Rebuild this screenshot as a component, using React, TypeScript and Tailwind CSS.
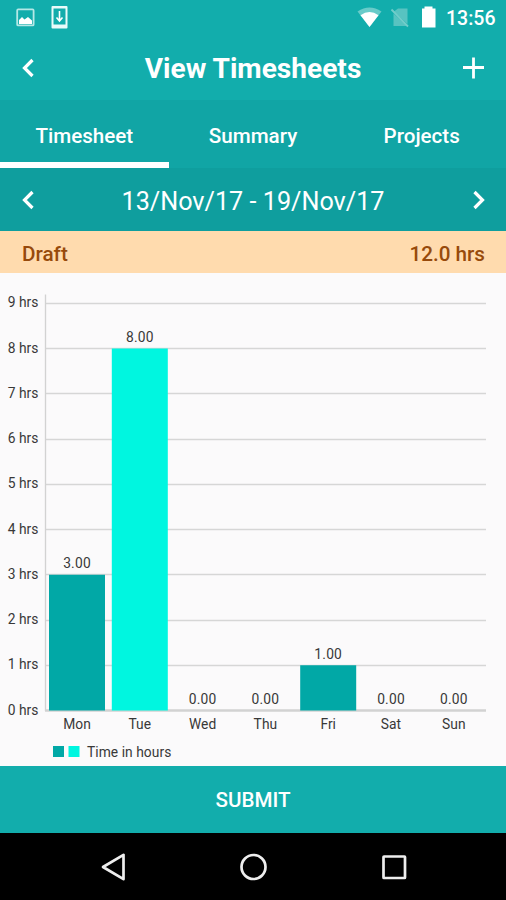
const days = [
  { name: "Mon", hours: 3 },
  { name: "Tue", hours: 8 },
  { name: "Wed", hours: 0 },
  { name: "Thu", hours: 0 },
  { name: "Fri", hours: 1 },
  { name: "Sat", hours: 0 },
  { name: "Sun", hours: 0 },
];

const BASE = 437.5;
const STEP = 45.25;

function Chevron({ right = false }: { right?: boolean }) {
  return (
    <svg width="14" height="20" viewBox="0 0 14 20" fill="none" stroke="#fff" strokeWidth="3.2">
      <path d={right ? "M2.5 2 10.5 10 2.5 18" : "M12.5 2 4.5 10 12.5 18"} />
    </svg>
  );
}

function StatusBar() {
  return (
    <div className="flex h-9 items-center justify-between bg-[#12adac] pl-4 pr-[11px]">
      <svg width="54" height="36" viewBox="16 0 54 36">
        <rect x="17.2" y="9.4" width="16.4" height="16" rx="1" fill="none" stroke="#b4e8e6" strokeWidth="1.8" />
        <path d="M19 24v-4l3-3 2.5 2.5L28 17l4 3.500V24z" fill="#fff" />
        <path fillRule="evenodd" d="M52.500 6h14a1 1 0 0 1 1 1v20.500a1 1 0 0 1-1 1h-14a1 1 0 0 1-1-1V7a1 1 0 0 1 1-1zM53.500 8.500v16h12v-16z" fill="#e9fbfa" />
        <path d="M59.500 11v10M56.500 17.500l3 3.500 3-3.500" fill="none" stroke="#fff" strokeWidth="1.6" />
      </svg>
      <div className="flex items-center">
        <svg width="90" height="36" viewBox="356 0 90 36">
          <path d="M357.500 11.500Q369.500 3.500 381.500 11.500L369.500 27z" fill="#69cbc9" />
          <path d="M360.500 15.200Q369.500 9 378.500 15.200L369.500 27z" fill="#fff" />
          <path d="M398 8.500h9.500v15.500L394 11.500zM393.500 13.500v12.500h13.500z" fill="#58c3c1" />
          <path d="M391.500 9.500 408 26.500" stroke="#72cdca" strokeWidth="1.8" />
          <path d="M424.500 6.500h8v2h3v19h-13.500v-19h2.500z" fill="#fff" />
        </svg>
        <span className="w-[49px] whitespace-nowrap pt-0.5 text-[19.500px] font-medium leading-9">13:56</span>
      </div>
    </div>
  );
}

function Chart() {
  return (
    <svg className="block h-[493px] w-full bg-[#fbfafb]" viewBox="0 0 506 493" fontSize="13.8" letterSpacing="0.05" fill="#383838">
      {Array.from({ length: 10 }, (_, i) => (
        <g key={i}>
          <path d={`M45 ${Math.floor(BASE - i * STEP) + 0.5}H486`} stroke={i ? "#d6d6d6" : "#d2d2d2"} strokeWidth={i ? 1.3 : 2.5} />
          <text x="38.500" y={Math.floor(BASE - i * STEP + 4.5)} textAnchor="end">{i} hrs</text>
        </g>
      ))}
      <path d="M45.500 21.500V438" stroke="#d2d2d2" strokeWidth="1.3" />
      {days.map((d, i) => {
        const x = 77 + i * 62.8;
        const h = d.hours * STEP;
        return (
          <g key={d.name} textAnchor="middle">
            {h > 0 && <rect x={x - 28} y={BASE - h} width="56" height={h} fill={i === 1 ? "#00f6e0" : "#01a8a6"} />}
            <text x={x} y={Math.floor(BASE - h - 6)} letterSpacing="0.2">{d.hours.toFixed(2)}</text>
            <text x={x} y="456">{d.name}</text>
          </g>
        );
      })}
      <rect x="53" y="473" width="11" height="11" fill="#01a8a6" />
      <rect x="68.500" y="473" width="11" height="11" fill="#00f6e0" />
      <text x="87" y="484">Time in hours</text>
    </svg>
  );
}

export default function App() {
  return (
    <main className="flex h-[900px] w-[506px] flex-col overflow-hidden bg-black font-['Roboto',sans-serif] text-white">
      <StatusBar />
      <header className="flex h-16 items-center justify-between bg-[#12adac] pl-5 pr-[22px]">
        <Chevron />
        <h1 className="pl-2.5 pt-[3px] text-[28.100px] font-bold">View Timesheets</h1>
        <svg width="22" height="22" viewBox="0 0 22 22" stroke="#fff" strokeWidth="2.8">
          <path d="M11.500 0.500V21.500M1 10.500H22" />
        </svg>
      </header>
      <nav className="grid h-[68px] grid-cols-3 bg-[#11a5a5] text-center text-[20.600px] font-medium leading-[72px]">
        <span className="h-[68px] border-b-[6px] border-white">Timesheet</span>
        <span>Summary</span>
        <span>Projects</span>
      </nav>
      <section className="flex h-[63px] items-center justify-between bg-[#0f9e9e] pl-5 pr-5">
        <Chevron />
        <span className="pt-1 text-[25.200px]">13/Nov/17 - 19/Nov/17</span>
        <Chevron right />
      </section>
      <section className="flex h-[42px] items-center justify-between bg-[#ffdbae] pl-[22px] pr-[21px] pt-1.5 text-[20.700px] font-medium text-[#974a0b]">
        <span>Draft</span>
        <span>12.0 hrs</span>
      </section>
      <Chart />
      <button className="h-[67px] bg-[#12adac] pt-0.5 text-[20.600px] font-medium">SUBMIT</button>
      <footer className="h-[67px] bg-black">
        <svg width="506" height="67" fill="none" stroke="#eee" strokeWidth="2.7">
          <path d="M103 34 123.500 21.800V46.200Z" strokeLinejoin="round" />
          <circle cx="253.500" cy="34" r="12" />
          <rect x="383.500" y="23.500" width="21.500" height="21.500" rx=".5" />
        </svg>
      </footer>
    </main>
  );
}
